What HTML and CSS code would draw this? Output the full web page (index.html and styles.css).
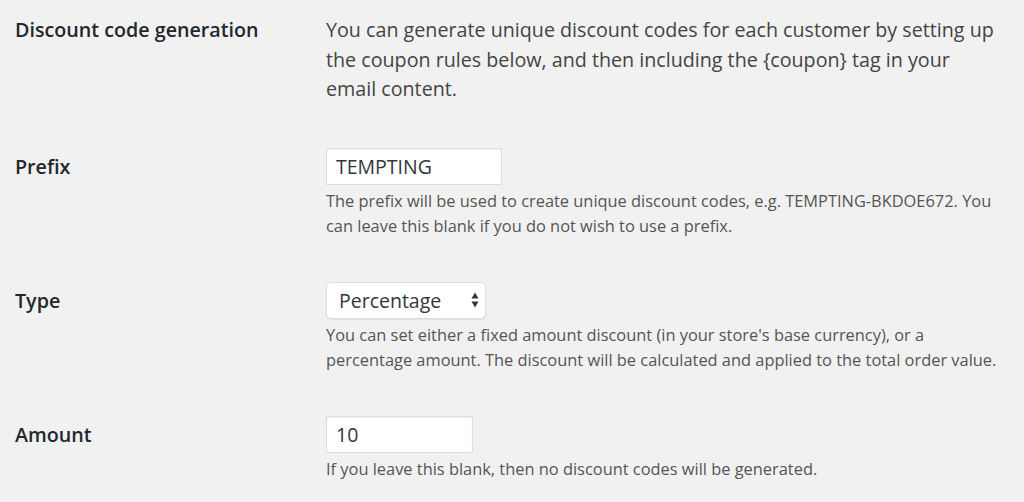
FILE: index.html
```html
<!DOCTYPE html>
<html lang="en">
<head>
    <meta charset="UTF-8">
    <title>Discount code generation</title>
    <link rel="stylesheet" href="styles.css">
</head>
<body>

    <div class="settings">
        <div class="row row-intro">
            <div class="row-label">Discount code generation</div>
            <div class="row-field">
                <p class="intro">You can generate unique discount codes for each customer by setting up the coupon rules below, and then including the {coupon} tag in your email content.</p>
            </div>
        </div>

        <div class="row">
            <label class="row-label" for="prefix">Prefix</label>
            <div class="row-field">
                <input type="text" id="prefix" class="text-input input-prefix" value="TEMPTING">
                <p class="description">The prefix will be used to create unique discount codes, e.g. TEMPTING-BKDOE672. You can leave this blank if you do not wish to use a prefix.</p>
            </div>
        </div>

        <div class="row">
            <label class="row-label" for="type">Type</label>
            <div class="row-field">
                <span class="select-wrap">
                    <select id="type" class="select-input">
                        <option>Percentage</option>
                        <option>Fixed amount</option>
                    </select>
                    <svg class="select-arrows" width="8" height="16" viewBox="0 0 8 16">
                        <path d="M4 0.5 L7.5 6.5 L0.5 6.5 Z" fill="#32373c"/>
                        <path d="M4 15.5 L7.5 9.5 L0.5 9.5 Z" fill="#32373c"/>
                    </svg>
                </span>
                <p class="description">You can set either a fixed amount discount (in your store's base currency), or a percentage amount. The discount will be calculated and applied to the total order value.</p>
            </div>
        </div>

        <div class="row">
            <label class="row-label" for="amount">Amount</label>
            <div class="row-field">
                <input type="text" id="amount" class="text-input input-amount" value="10">
                <p class="description">If you leave this blank, then no discount codes will be generated.</p>
            </div>
        </div>
    </div>

</body>
</html>
```

FILE: styles.css
```css
body {
    margin: 0;
    padding: 0;
    background-color: #f1f1f1;
    font-family: 'Open Sans', 'Noto Sans', sans-serif;
    color: #444;
}

.settings {
    display: flex;
    flex-direction: column;
    gap: 44px;
    padding: 15px 0 0 15px;
}

.row {
    display: flex;
}

.row-label {
    width: 311px;
    flex-shrink: 0;
    font-size: 19.7px;
    font-weight: 600;
    color: #23282d;
    line-height: 37px;
}

.row-intro .row-label {
    line-height: 29.5px;
}

.row-field {
    width: 675px;
}

.intro {
    margin: 0;
    font-size: 19.7px;
    line-height: 29.5px;
}

.description {
    margin: 3px 0 0;
    font-size: 16.4px;
    line-height: 25px;
    color: #555;
}

.text-input {
    display: block;
    box-sizing: border-box;
    height: 37px;
    margin: 0;
    padding: 0 9px;
    border: 1px solid #ddd;
    border-radius: 0;
    background-color: #fff;
    box-shadow: inset 0 1px 2px rgba(0,0,0,0.07);
    font-family: inherit;
    font-size: 19.5px;
    color: #32373c;
    outline: none;
}

.input-prefix {
    width: 176px;
}

.input-amount {
    width: 147px;
}

.select-wrap {
    position: relative;
    display: inline-block;
    vertical-align: top;
}

.select-input {
    display: block;
    box-sizing: border-box;
    width: 160px;
    height: 37px;
    margin: 0;
    padding: 0 12px;
    border: 1px solid #ddd;
    border-radius: 5px;
    background-color: #fff;
    box-shadow: 0 1px 2px rgba(0,0,0,0.07);
    font-family: inherit;
    font-size: 19.5px;
    color: #32373c;
    appearance: none;
    -webkit-appearance: none;
    outline: none;
}

.select-arrows {
    position: absolute;
    right: 7px;
    top: 10px;
    pointer-events: none;
}
```
